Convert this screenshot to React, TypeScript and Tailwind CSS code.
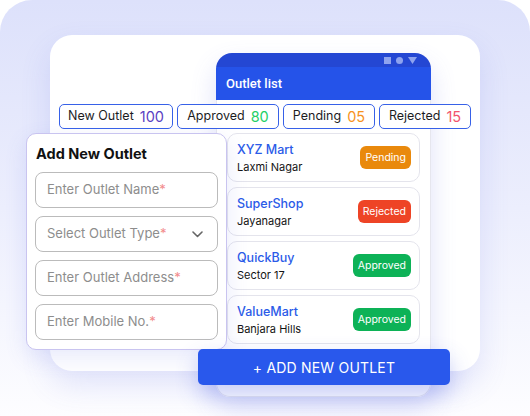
import React from "react";

const font = { fontFamily: "Inter, 'Noto Sans', sans-serif" };

type Item = { name: string; area: string; status: "Pending" | "Rejected" | "Approved" };

const items: Item[] = [
  { name: "XYZ Mart", area: "Laxmi Nagar", status: "Pending" },
  { name: "SuperShop", area: "Jayanagar", status: "Rejected" },
  { name: "QuickBuy", area: "Sector 17", status: "Approved" },
  { name: "ValueMart", area: "Banjara Hills", status: "Approved" },
];

function Badge({ status }: { status: Item["status"] }) {
  const cls =
    status === "Pending"
      ? "bg-[#e9890c]"
      : status === "Rejected"
      ? "bg-[#ee4426]"
      : "bg-[#0db257]";
  return (
    <div className={`h-[23px] px-[5px] rounded-[6px] flex items-center text-[10.5px] text-white ${cls}`}>
      {status}
    </div>
  );
}

function Chip({ label, value, color, w }: { label: string; value: string; color: string; w: string }) {
  return (
    <div className={`h-[25px] ${w} rounded-[5px] border border-[#3761e8] bg-white flex items-center justify-center gap-[6px]`}>
      <span className="text-[12.5px] text-[#1d1d1f]">{label}</span>
      <span className={`text-[14.5px] ${color}`}>{value}</span>
    </div>
  );
}

function Field({ label, select }: { label: string; select?: boolean }) {
  return (
    <div className="h-[36px] rounded-[8px] border border-[#bbbbbb] pl-[11px] pr-[14px] flex items-center justify-between">
      <span className="text-[13px] text-[#8d8d8d]">
        {label}
        <span className="text-[#f28c8c]">*</span>
      </span>
      {select && (
        <svg width="11" height="7" viewBox="0 0 11 7" fill="none">
          <path d="M1 1l4.5 4.5L10 1" stroke="#666" strokeWidth="1.6" strokeLinecap="round" strokeLinejoin="round" />
        </svg>
      )}
    </div>
  );
}

export default function App() {
  return (
    <div className="w-[530px] h-[416px] bg-white overflow-hidden" style={font}>
      <div className="relative w-[530px] h-[416px] rounded-t-[32px] bg-linear-to-b from-[#dde1fb] via-[#eceefd] to-[#fdfdff]">
        {/* white card */}
        <div className="absolute left-[50px] top-[35px] w-[430px] h-[336px] rounded-[22px] bg-white shadow-[0_14px_30px_rgba(95,105,225,0.16)]" />

        {/* phone */}
        <div className="absolute left-[216px] top-[53px] w-[215px] h-[344px] flex flex-col rounded-t-[16px] rounded-b-[14px] bg-white overflow-hidden shadow-[0_12px_26px_rgba(95,105,225,0.2)]">
          <div className="h-[14px] shrink-0 bg-[#2447d3] flex items-center justify-end gap-[5px] pr-[14px]">
            <div className="w-[7px] h-[7px] bg-[#8ea3ef]" />
            <div className="w-[7px] h-[7px] rounded-full bg-[#8ea3ef]" />
            <svg width="9" height="7" viewBox="0 0 9 7">
              <path d="M0 0h9L4.5 7z" fill="#8ea3ef" />
            </svg>
          </div>
          <div
            className="h-[33px] shrink-0 bg-[#2553e9] flex items-center pl-[10px] text-white text-[13px] font-medium"
            style={{ fontFamily: "Roboto, sans-serif" }}
          >
            Outlet list
          </div>
          <div className="flex-1 flex flex-col gap-[5px] px-[10px] pt-[33px] border-x border-b border-[#e6e6ee] rounded-b-[14px]">
            {items.map((it) => (
              <div
                key={it.name}
                className="h-[49px] shrink-0 rounded-[10px] border border-[#e4e4ec] pl-[9px] pr-[8px] flex items-center justify-between"
              >
                <div className="flex flex-col">
                  <span className="text-[12.5px] leading-[18px] font-medium text-[#2b5be8]">{it.name}</span>
                  <span className="text-[11px] leading-[16px] text-[#141414]">{it.area}</span>
                </div>
                <Badge status={it.status} />
              </div>
            ))}
          </div>
        </div>

        {/* chips */}
        <div className="absolute left-[59px] top-[104px] flex gap-[4px]">
          <Chip label="New Outlet" value="100" color="text-[#5a3fc2]" w="w-[114px]" />
          <Chip label="Approved" value="80" color="text-[#25cf66]" w="w-[102px]" />
          <Chip label="Pending" value="05" color="text-[#f7931e]" w="w-[92px]" />
          <Chip label="Rejected" value="15" color="text-[#f2546d]" w="w-[92px]" />
        </div>

        {/* form */}
        <div className="absolute left-[26px] top-[133px] w-[201px] h-[217px] rounded-[10px] border border-[#c9c4f0] bg-white px-[8px] pt-[10px] shadow-[0_8px_22px_rgba(95,105,225,0.14)] flex flex-col">
          <div className="text-[14.5px] leading-[20px] font-bold text-[#111] pl-[1px] mb-[8px]">Add New Outlet</div>
          <div className="flex flex-col gap-[8px]">
            <Field label="Enter Outlet Name" />
            <Field label="Select Outlet Type" select />
            <Field label="Enter Outlet Address" />
            <Field label="Enter Mobile No." />
          </div>
        </div>

        {/* button */}
        <div className="absolute left-[198px] top-[349px] w-[252px] h-[36px] rounded-[5px] bg-[#2958ec] flex items-center justify-center text-white text-[14px] tracking-[0.2px] shadow-[0_10px_22px_rgba(70,90,230,0.3)]">
          + ADD NEW OUTLET
        </div>
      </div>
    </div>
  );
}
